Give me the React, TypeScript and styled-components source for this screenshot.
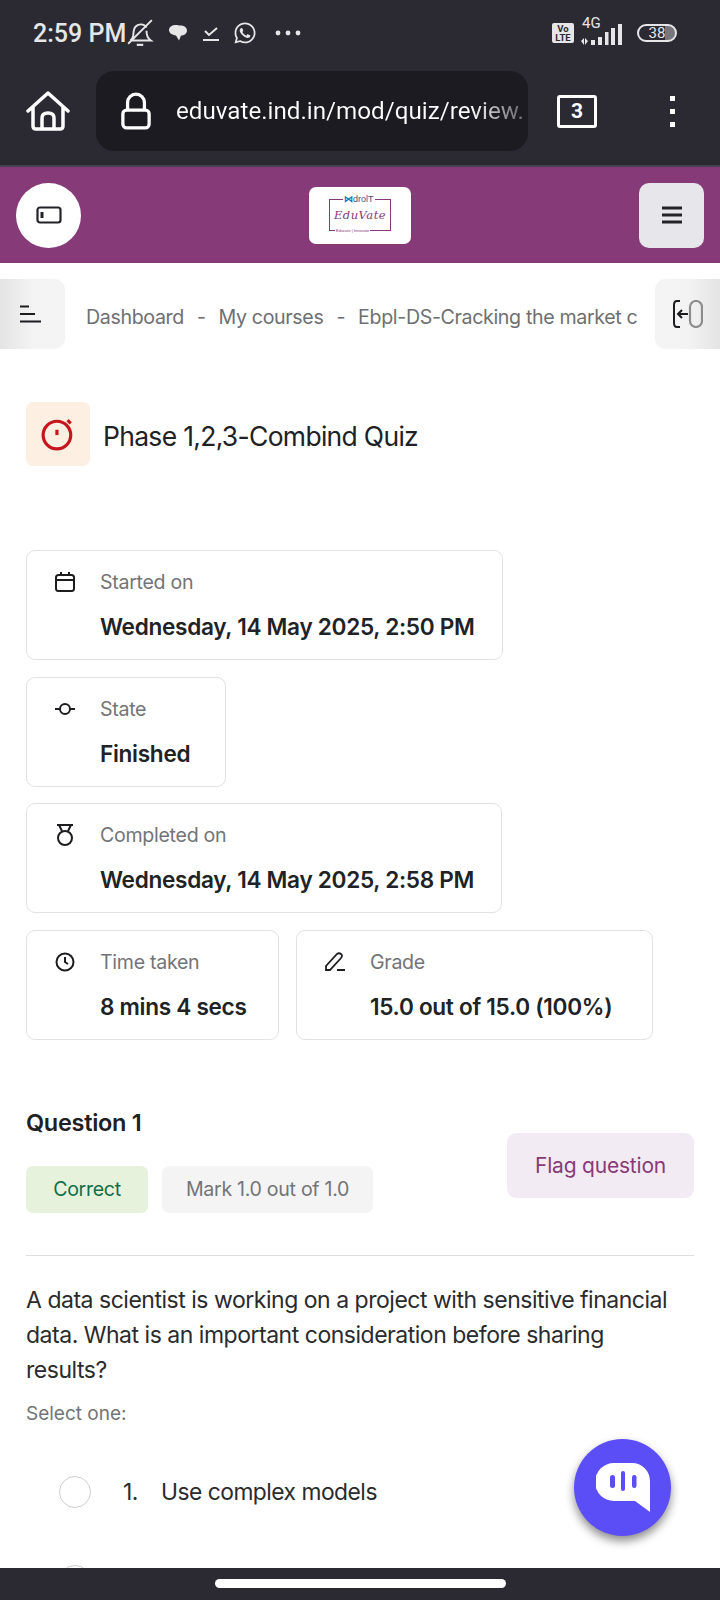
import React from "react";
import styled, { createGlobalStyle } from "styled-components";
import { FaWhatsapp } from "react-icons/fa";

const GlobalStyle = createGlobalStyle`
  html, body {
    margin: 0;
    padding: 0;
    background: #fff;
  }
  * {
    box-sizing: border-box;
  }
`;

const Phone = styled.div`
  position: relative;
  width: 720px;
  height: 1600px;
  display: flex;
  flex-direction: column;
  overflow: hidden;
  background: #fff;
  font-family: Inter, "Liberation Sans", sans-serif;
`;

const Chrome = styled.header`
  height: 167px;
  flex: none;
  background: #2b2a33;
  color: #fff;
  border-bottom: 2px solid #45424d;
`;

const StatusBar = styled.div`
  height: 71px;
  padding: 0 43px 5px 33px;
  display: flex;
  align-items: center;
  font-family: Roboto, sans-serif;
  color: #e6e6e8;
`;

const Clock = styled.span`
  font-size: 25px;
  font-weight: 500;
`;

const StatusIcons = styled.div`
  display: flex;
  align-items: center;
  gap: 13px;
  flex: 1;
`;

const NetworkGroup = styled.div`
  display: flex;
  align-items: center;
  gap: 7px;
`;

const VoLte = styled.span`
  width: 22px;
  height: 20px;
  border-radius: 2px;
  background: #e6e6e8;
  color: #2b2a33;
  font-size: 9.5px;
  font-weight: 700;
  line-height: 9px;
  text-align: center;
  padding-top: 1px;
`;

const Signal = styled.div`
  position: relative;
  width: 42px;
  height: 24px;
`;

const FourG = styled.span`
  position: absolute;
  left: 1px;
  top: -5px;
  font-size: 15px;
  line-height: 15px;
`;

const Battery = styled.span`
  width: 40px;
  height: 18px;
  margin-left: 7px;
  border: 2px solid #e6e6e8;
  border-radius: 9px;
  font-size: 15px;
  line-height: 14px;
  text-align: center;
  background: linear-gradient(90deg, transparent 72%, #77767c 72%);
`;

const Toolbar = styled.div`
  height: 80px;
  padding-left: 26px;
  display: flex;
  align-items: center;
`;

const UrlBar = styled.div`
  width: 432px;
  height: 80px;
  margin-left: 26px;
  padding-left: 25px;
  border-radius: 18px;
  background: #1c1b22;
  display: flex;
  align-items: center;
  gap: 25px;
  overflow: hidden;
`;

const UrlText = styled.span`
  font-family: Roboto, sans-serif;
  font-size: 24.2px;
  white-space: nowrap;
  color: transparent;
  background: linear-gradient(90deg, #fff 295px, #77767c 340px);
  background-clip: text;
  -webkit-background-clip: text;
`;

const TabCount = styled.span`
  width: 40px;
  height: 33px;
  margin-left: 29px;
  border: 3px solid #fff;
  border-radius: 3px;
  font-family: Roboto, sans-serif;
  font-size: 21px;
  font-weight: 700;
  line-height: 27px;
  text-align: center;
`;

const MoreDots = styled.div`
  margin-left: 73px;
  display: flex;
  flex-direction: column;
  gap: 8px;
`;

const Dot = styled.i`
  display: block;
  width: 5px;
  height: 5px;
  background: #fff;
`;

const SiteHeader = styled.div`
  height: 96px;
  flex: none;
  padding: 0 16px;
  background: #873a78;
  display: flex;
  align-items: center;
  justify-content: space-between;
`;

const RoundButton = styled.div`
  width: 65px;
  height: 65px;
  border-radius: 50%;
  background: #fff;
  display: flex;
  align-items: center;
  justify-content: center;
`;

const LogoCard = styled.div`
  width: 102px;
  height: 57px;
  border-radius: 7px;
  background: #fff;
  display: flex;
  align-items: center;
  justify-content: center;
`;

const LogoFrame = styled.div`
  position: relative;
  width: 62px;
  height: 32px;
  border: 1px solid #873a78;
  display: flex;
  align-items: center;
  justify-content: center;
`;

const LogoTop = styled.span`
  position: absolute;
  top: -6px;
  left: 13px;
  padding: 0 1px;
  background: #fff;
  color: #4a4f7c;
  font-family: "Liberation Sans", sans-serif;
  font-size: 9px;
  line-height: 10px;
  white-space: nowrap;
`;

const LogoMark = styled.b`
  color: #0a76c4;
`;

const LogoName = styled.span`
  color: #873a78;
  font-family: "DejaVu Serif", serif;
  font-style: italic;
  font-size: 11.5px;
  letter-spacing: 0.5px;
`;

const LogoTag = styled.span`
  position: absolute;
  bottom: -3px;
  left: 5px;
  padding: 0 1px;
  background: #fff;
  color: #873a78;
  font-family: "Liberation Sans", sans-serif;
  font-size: 4px;
  line-height: 5px;
  white-space: nowrap;
`;

const SquareButton = styled.div`
  width: 65px;
  height: 65px;
  border-radius: 10px;
  background: #e6e6eb;
  display: flex;
  align-items: center;
  justify-content: center;
`;

const Crumbs = styled.nav`
  height: 70px;
  flex: none;
  margin-top: 16px;
  display: flex;
  align-items: center;
`;

const EdgeButton = styled.div<{ $side: "left" | "right" }>`
  width: 65px;
  height: 70px;
  flex: none;
  display: flex;
  align-items: center;
  justify-content: center;
  border-radius: ${(p) => (p.$side === "left" ? "0 10px 10px 0" : "10px 0 0 10px")};
  background: linear-gradient(
    ${(p) => (p.$side === "left" ? "90deg" : "270deg")},
    #e4e4e4 0%,
    #f3f3f3 50%,
    #f4f4f4 100%
  );
`;

const CrumbTrail = styled.div`
  flex: 1;
  min-width: 0;
  padding: 6px 0 0 21px;
  display: flex;
  gap: 13px;
  overflow: hidden;
  white-space: nowrap;
  color: #6e6f72;
  font-size: 19.6px;
  letter-spacing: -0.35px;
`;

const Content = styled.main`
  flex: 1;
  min-height: 0;
  padding: 53px 26px 0;
  overflow: hidden;
`;

const TitleRow = styled.div`
  display: flex;
  align-items: center;
  gap: 13px;
`;

const TitleIcon = styled.div`
  width: 64px;
  height: 64px;
  border-radius: 7px;
  background: #fdf0e3;
  display: flex;
  align-items: center;
  justify-content: center;
`;

const Title = styled.h1`
  margin: 0;
  padding-top: 3px;
  color: #202124;
  font-size: 26.5px;
  font-weight: 400;
  letter-spacing: -0.7px;
`;

const Facts = styled.div`
  margin-top: 84px;
  display: flex;
  flex-direction: column;
  gap: 16.5px;
`;

const FactRow = styled.div`
  display: flex;
  gap: 17px;
`;

const Fact = styled.div<{ $width: number }>`
  width: ${(p) => p.$width}px;
  height: 110px;
  padding: 16px 0 0 26px;
  border: 1px solid #e2e2e4;
  border-radius: 9px;
  display: grid;
  grid-template-columns: 24px 1fr;
  grid-template-rows: 30px 1fr;
  column-gap: 23px;
  row-gap: 16px;
  align-items: center;
`;

const FactIcon = styled.div`
  display: flex;
  align-items: center;
  justify-content: center;
`;

const FactLabel = styled.div`
  color: #737477;
  font-size: 19.6px;
  letter-spacing: -0.3px;
`;

const FactValue = styled.div`
  grid-column: 2;
  align-self: start;
  color: #212225;
  font-size: 22.6px;
  font-weight: 600;
  letter-spacing: -0.3px;
  white-space: nowrap;
`;

const QuestionHead = styled.section`
  margin-top: 66px;
  padding-bottom: 42px;
  border-bottom: 1px solid #dedede;
  display: flex;
  justify-content: space-between;
  align-items: flex-start;
`;

const QuestionName = styled.h2`
  margin: 0;
  color: #1f2023;
  font-size: 23.5px;
  line-height: 34px;
  font-weight: 600;
  letter-spacing: -0.3px;
`;

const Chips = styled.div`
  margin-top: 26px;
  display: flex;
  gap: 14px;
`;

const Chip = styled.span<{ $tone: "good" | "plain"; $width: number }>`
  width: ${(p) => p.$width}px;
  height: 47px;
  border-radius: 7px;
  display: flex;
  align-items: center;
  justify-content: center;
  font-size: 19.6px;
  letter-spacing: -0.3px;
  background: ${(p) => (p.$tone === "good" ? "#e7f2dd" : "#f4f4f5")};
  color: ${(p) => (p.$tone === "good" ? "#0f7048" : "#737477")};
`;

const FlagButton = styled.div`
  width: 187px;
  height: 65px;
  margin-top: 27px;
  border-radius: 9px;
  background: #f2ebf3;
  color: #873a78;
  display: flex;
  align-items: center;
  justify-content: center;
  font-size: 21px;
  letter-spacing: -0.2px;
`;

const QuestionText = styled.p`
  margin: 27px 0 0;
  max-width: 660px;
  color: #2a2b2e;
  font-size: 23px;
  line-height: 35px;
  letter-spacing: -0.48px;
`;

const Prompt = styled.div`
  margin-top: 11px;
  color: #737477;
  font-size: 19px;
  line-height: 30px;
`;

const AnswerList = styled.div`
  margin-top: 47px;
  padding-left: 33px;
  display: flex;
  flex-direction: column;
  gap: 57px;
`;

const Answer = styled.div`
  display: flex;
  align-items: center;
  color: #2a2b2e;
  font-size: 22.8px;
  letter-spacing: -0.5px;
`;

const Radio = styled.span`
  width: 32px;
  height: 32px;
  flex: none;
  border: 1px solid #cfcfcf;
  border-radius: 50%;
  background: #fff;
`;

const AnswerIndex = styled.span`
  width: 38px;
  margin-left: 32px;
`;

const ChatFab = styled.div`
  position: absolute;
  left: 574px;
  top: 1439px;
  width: 97px;
  height: 97px;
  border-radius: 50%;
  background: #5b4ef7;
  box-shadow: 0 5px 10px rgba(0, 0, 0, 0.45);
  display: flex;
  align-items: center;
  justify-content: center;
`;

const NavBar = styled.footer`
  height: 32px;
  flex: none;
  background: #2b2a33;
  display: flex;
  justify-content: center;
  padding-top: 11px;
`;

const HomePill = styled.div`
  width: 291px;
  height: 9px;
  border-radius: 5px;
  background: #fff;
`;

export default function App() {
  return (
    <Phone>
      <GlobalStyle />
      <Chrome>
        <StatusBar>
          <Clock>2:59 PM</Clock>
          <StatusIcons>
            <svg width="28" height="28" viewBox="0 0 24 26" fill="none" stroke="#e6e6e8" strokeWidth="1.800">
              <path d="M3 20c3-2 3-5 3-8 0-4 3-7 7-7 2 0 4 1 5 3M18 11c0 3 1 7 4 9H3M23 1 1 23" />
              <path d="M9 23h6v2H9z" fill="#e6e6e8" stroke="none" />
            </svg>
            <svg width="22" height="22" viewBox="0 0 22 22" fill="#e6e6e8">
              <path d="M2 8c0-3 3-5 7-5 1 0 2 0 3 .5C16 3 20 5 20 8.500c0 3-3 5-6 5l-2 5-3-5C5 13 2 11 2 8z" />
            </svg>
            <svg width="18" height="18" viewBox="0 0 18 18" fill="none" stroke="#e6e6e8" strokeWidth="2">
              <path d="m3 7 4 4 8-7M1 16h16" />
            </svg>
            <FaWhatsapp size={24} color="#e6e6e8" />
            <svg width="26" height="6" viewBox="0 0 26 6" fill="#e6e6e8" style={{ marginLeft: 5 }}>
              <circle cx="3" cy="3" r="2.400" />
              <circle cx="13" cy="3" r="2.400" />
              <circle cx="23" cy="3" r="2.400" />
            </svg>
          </StatusIcons>
          <NetworkGroup>
            <VoLte>
              Vo
              <br />
              LTE
            </VoLte>
            <Signal>
              <FourG>4G</FourG>
              <svg width="42" height="24" viewBox="0 0 42 24" fill="#e6e6e8">
                <path d="M0 20l3-3v7zM4 17l3 3-3 4zM10 19h4v5h-4zM17 16h4v8h-4zM24 11h3.500v13H24zM30 7h4v17h-4zM37 3h4v21h-4z" />
              </svg>
            </Signal>
            <Battery>38</Battery>
          </NetworkGroup>
        </StatusBar>
        <Toolbar>
          <svg width="44" height="42" viewBox="0 0 44 42" fill="none" stroke="#fff" strokeWidth="3.500" strokeLinejoin="round" strokeLinecap="round">
            <path d="M2 21 22 3l20 18M7 17v19q0 3 3 3h24q3 0 3-3V17" />
            <path d="M16 38V28q0-5 6-5t6 5v10" />
          </svg>
          <UrlBar>
            <svg width="30" height="40" viewBox="0 0 32 40" fill="none" stroke="#fff" strokeWidth="3.500">
              <path d="M7 19V11a9 9 0 0 1 18 0v8" />
              <rect x="2" y="19" width="28" height="19" rx="4" />
            </svg>
            <UrlText>eduvate.ind.in/mod/quiz/review.</UrlText>
          </UrlBar>
          <TabCount>3</TabCount>
          <MoreDots>
            <Dot />
            <Dot />
            <Dot />
          </MoreDots>
        </Toolbar>
      </Chrome>

      <SiteHeader>
        <RoundButton>
          <svg width="26" height="18" viewBox="0 0 26 18" fill="none" stroke="#232329" strokeWidth="2.200">
            <rect x="1.500" y="1.500" width="23" height="15" rx="2.500" />
            <path d="M6 6v6" strokeWidth="3" />
          </svg>
        </RoundButton>
        <LogoCard>
          <LogoFrame>
            <LogoTop>
              <LogoMark>⋈</LogoMark>drolT
            </LogoTop>
            <LogoName>EduVate</LogoName>
            <LogoTag>Educate | Innovate</LogoTag>
          </LogoFrame>
        </LogoCard>
        <SquareButton>
          <svg width="20" height="18" viewBox="0 0 20 18" fill="none" stroke="#232329" strokeWidth="2.800">
            <path d="M0 2h20M0 9h20M0 16h20" />
          </svg>
        </SquareButton>
      </SiteHeader>

      <Crumbs>
        <EdgeButton $side="left">
          <svg width="21" height="18" viewBox="0 0 21 18" fill="none" stroke="#1d1d20" strokeWidth="2.200" style={{ marginRight: 5 }}>
            <path d="M0 1.500h9M0 9h15M0 16.500h21" />
          </svg>
        </EdgeButton>
        <CrumbTrail>
          <span>Dashboard</span>
          <span>-</span>
          <span>My courses</span>
          <span>-</span>
          <span>Ebpl-DS-Cracking the market c</span>
        </CrumbTrail>
        <EdgeButton $side="right">
          <svg width="30" height="28" viewBox="0 0 30 28" fill="none" strokeWidth="2">
            <path d="M7 1H4Q1 1 1 5v18q0 4 3 4h3" stroke="#1d1d20" />
            <path d="M15 14H5M9 10l-4 4 4 4" stroke="#1d1d20" />
            <rect x="17" y="1" width="12" height="26" rx="6" stroke="#8c8c8e" strokeWidth="2.200" />
          </svg>
        </EdgeButton>
      </Crumbs>

      <Content>
        <TitleRow>
          <TitleIcon>
            <svg width="34" height="34" viewBox="0 0 32 32" fill="none" stroke="#c4161c" strokeWidth="3">
              <circle cx="15" cy="17" r="13" />
              <path d="M15 12v5" strokeWidth="3" />
              <path d="m25 3 3 3" strokeWidth="3" />
            </svg>
          </TitleIcon>
          <Title>Phase 1,2,3-Combind Quiz</Title>
        </TitleRow>

        <Facts>
          <FactRow>
            <Fact $width={477}>
              <FactIcon>
                <svg width="20" height="20" viewBox="0 0 20 20" fill="none" stroke="#1d1d20" strokeWidth="2">
                  <rect x="1" y="3" width="18" height="16" rx="2.500" />
                  <path d="M1 8h18M6 0v4M14 0v4" />
                </svg>
              </FactIcon>
              <FactLabel>Started on</FactLabel>
              <FactValue>Wednesday, 14 May 2025, 2:50 PM</FactValue>
            </Fact>
          </FactRow>
          <FactRow>
            <Fact $width={200}>
              <FactIcon>
                <svg width="20" height="14" viewBox="0 0 20 14" fill="none" stroke="#1d1d20" strokeWidth="2">
                  <circle cx="10" cy="7" r="5" />
                  <path d="M0 7h5M15 7h5" />
                </svg>
              </FactIcon>
              <FactLabel>State</FactLabel>
              <FactValue>Finished</FactValue>
            </Fact>
          </FactRow>
          <FactRow>
            <Fact $width={476}>
              <FactIcon>
                <svg width="18" height="22" viewBox="0 0 18 22" fill="none" stroke="#1d1d20" strokeWidth="2">
                  <circle cx="9" cy="14" r="7" />
                  <path d="M1 1h16M3 1l3 6M15 1l-3 6" />
                </svg>
              </FactIcon>
              <FactLabel>Completed on</FactLabel>
              <FactValue>Wednesday, 14 May 2025, 2:58 PM</FactValue>
            </Fact>
          </FactRow>
          <FactRow>
            <Fact $width={253}>
              <FactIcon>
                <svg width="20" height="20" viewBox="0 0 20 20" fill="none" stroke="#1d1d20" strokeWidth="2">
                  <circle cx="10" cy="10" r="8.500" />
                  <path d="M10 5v5l3 2" />
                </svg>
              </FactIcon>
              <FactLabel>Time taken</FactLabel>
              <FactValue>8 mins 4 secs</FactValue>
            </Fact>
            <Fact $width={357}>
              <FactIcon>
                <svg width="20" height="20" viewBox="0 0 20 20" fill="none" stroke="#1d1d20" strokeWidth="1.800">
                  <path d="M1 18v-4L12 2q2-1.500 4 0t0 4L5 18zM12 18h8" />
                </svg>
              </FactIcon>
              <FactLabel>Grade</FactLabel>
              <FactValue>15.0 out of 15.0 (100%)</FactValue>
            </Fact>
          </FactRow>
        </Facts>

        <QuestionHead>
          <div>
            <QuestionName>Question 1</QuestionName>
            <Chips>
              <Chip $tone="good" $width={122}>
                Correct
              </Chip>
              <Chip $tone="plain" $width={211}>
                Mark 1.0 out of 1.0
              </Chip>
            </Chips>
          </div>
          <FlagButton>Flag question</FlagButton>
        </QuestionHead>

        <QuestionText>
          A data scientist is working on a project with sensitive financial data. What is an important consideration
          before sharing results?
        </QuestionText>
        <Prompt>Select one:</Prompt>

        <AnswerList>
          <Answer>
            <Radio />
            <AnswerIndex>1.</AnswerIndex>
            Use complex models
          </Answer>
          <Answer>
            <Radio />
          </Answer>
        </AnswerList>
      </Content>

      <NavBar>
        <HomePill />
      </NavBar>

      <ChatFab>
        <svg width="54" height="49" viewBox="0 0 54 49" fill="#fff">
          <path d="M18 0h18a18 18 0 0 1 18 18v31L39 38H18A19 19 0 0 1 18 0z" />
          <rect x="14" y="12" width="5" height="13" rx="2.500" fill="#5b4ef7" />
          <rect x="25" y="8" width="4" height="20" rx="2" fill="#5b4ef7" />
          <rect x="36" y="12" width="4.500" height="13" rx="2.200" fill="#5b4ef7" />
        </svg>
      </ChatFab>
    </Phone>
  );
}
